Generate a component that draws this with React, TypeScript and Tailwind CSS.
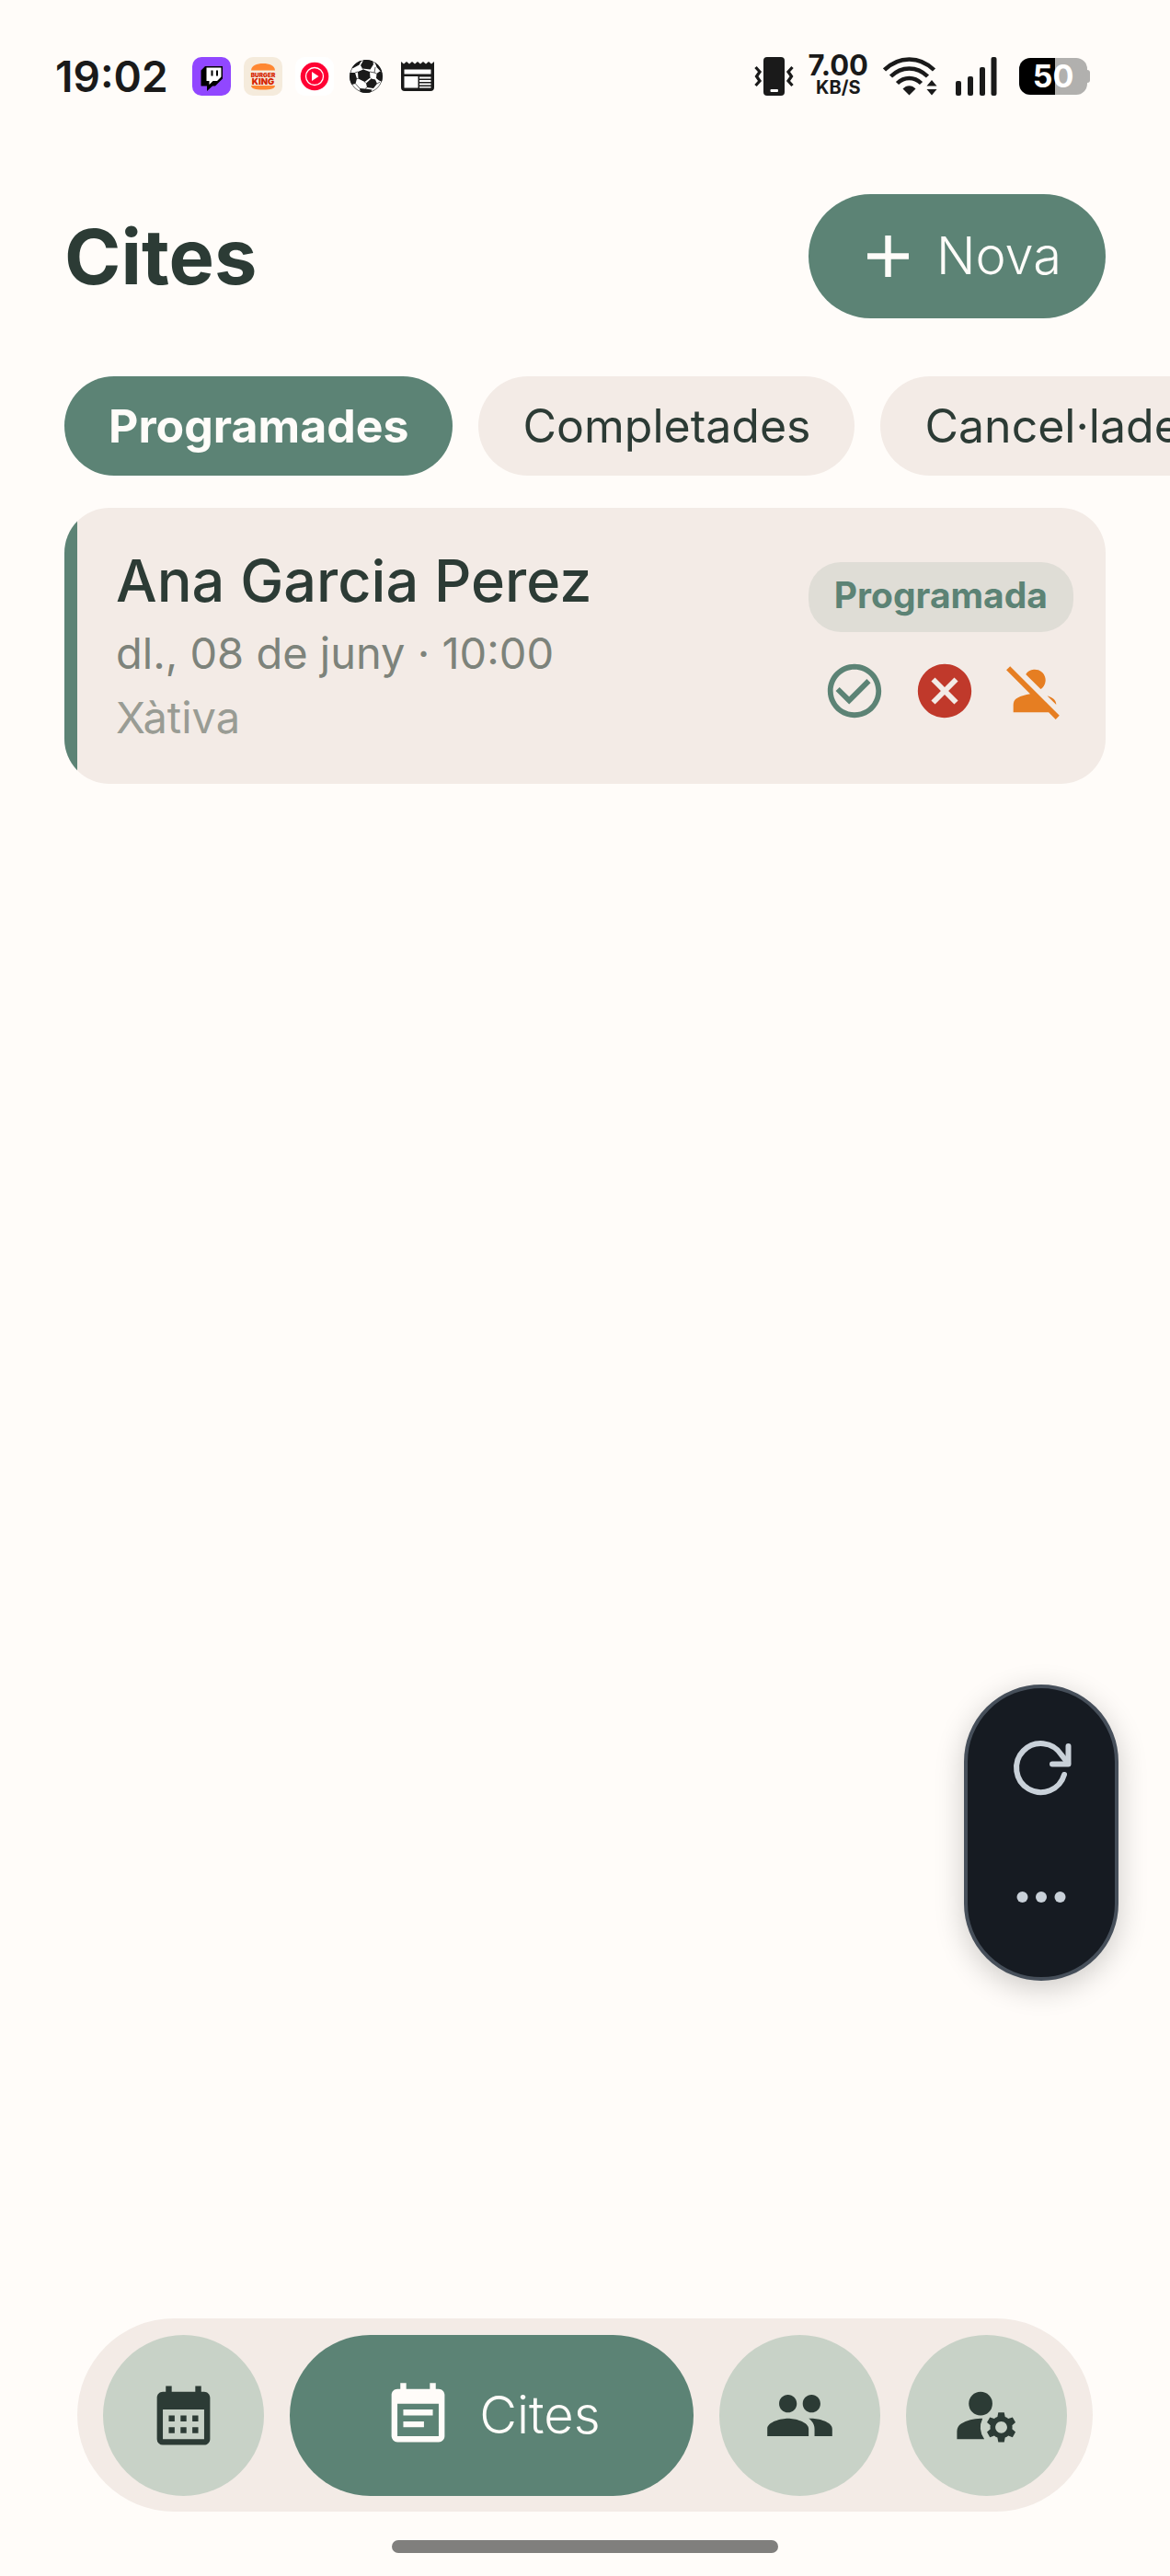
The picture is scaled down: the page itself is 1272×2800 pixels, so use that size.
import { useState } from "react";
import {
  MdAdd,
  MdCalendarMonth,
  MdCancel,
  MdCheckCircleOutline,
  MdEventNote,
  MdManageAccounts,
  MdPeople,
  MdPersonOff,
} from "react-icons/md";

const FILTERS = ["Programades", "Completades", "Cancel·lades"];

const NAV_ITEMS = [
  { label: "Calendari", Icon: MdCalendarMonth },
  { label: "Cites", Icon: MdEventNote },
  { label: "Pacients", Icon: MdPeople },
  { label: "Compte", Icon: MdManageAccounts },
];

const APPOINTMENTS = [
  {
    id: 1,
    name: "Ana Garcia Perez",
    date: "dl., 08 de juny · 10:00",
    place: "Xàtiva",
    status: "Programada",
  },
];

function TwitchIcon() {
  return (
    <svg viewBox="0 0 42 42" className="size-[42px]" aria-hidden="true">
      <rect width="42" height="42" rx="10" fill="#9147ff" />
      <path d="M14 10 9.500 14.500v17h6.500V37l6-5.500h3L33 23.500V10z" fill="#000" />
      <path
        d="M15.500 11.500H31.500V21.500l-4.500 4.500h-4.500l-4 4v-4h-3z"
        fill="#fff"
      />
      <path d="M20.500 14.500h2v6h-2zM26 14.500h2v6h-2z" fill="#000" />
    </svg>
  );
}

function BurgerIcon() {
  return (
    <svg viewBox="0 0 42 42" className="size-[42px]" aria-hidden="true">
      <rect width="42" height="42" rx="10" fill="#f5ebdc" />
      <path d="M8 14.500C8.500 9 14 7 21 7s12.500 2 13 7.500z" fill="#ff8732" />
      <path d="M8 31h26c-.5 3.500-4 4.500-13 4.500S8.500 34.500 8 31z" fill="#ff8732" />
      <g
        fill="#d62300"
        fontFamily="Inter, sans-serif"
        fontWeight="900"
        textAnchor="middle"
      >
        <text x="21" y="21.500" fontSize="6.500">
          BURGER
        </text>
        <text x="21" y="29.500" fontSize="9.500">
          KING
        </text>
      </g>
    </svg>
  );
}

function MusicIcon() {
  return (
    <svg viewBox="0 0 42 42" className="size-[42px]" aria-hidden="true">
      <rect width="42" height="42" rx="10" fill="#fff" />
      <circle cx="21" cy="21" r="15.300" fill="#ff0033" />
      <circle cx="21" cy="21" r="9.500" fill="none" stroke="#fff" strokeWidth="1.300" />
      <path d="M18 16v10l7.500-5z" fill="#fff" />
    </svg>
  );
}

function SoccerIcon() {
  return (
    <svg viewBox="0 0 36 36" className="size-[36px]" aria-hidden="true">
      <defs>
        <clipPath id="ball">
          <circle cx="18" cy="18" r="18" />
        </clipPath>
      </defs>
      <g clipPath="url(#ball)">
        <circle cx="18" cy="18" r="17.600" fill="#fff" stroke="#1a1a1a" strokeWidth=".8" />
        <path
          d="M9 13 15 10.500 22 13 22.500 19.500 16.500 24 9.500 20.500zM12 6 16-1 25 0 26 5 22.500 10.500 14 9.500zM2 9 9 0 13 1 10.500 5.500 4 9zM27 1 37 9 35 14 29.500 8zM29.500 15 33 12.500 37 14 36 24 32 22.500 29 20zM-1 14 6 14 8 20.500 6.500 26 2 27-1 22zM18 25.500 23.500 20.500 28 21.500 30 26 26 31 19 30zM11 31 17 31.500 24.500 32.500 22 37 12 37z"
          fill="#1a1a1a"
        />
        <path
          d="M9 13 6 14M15 10.500 14 9.500M22 13 27 14 29.500 15M27 14 28 8M22.500 19.500 23.500 20.500M16.500 24 18 25.500M9.500 20.500 8 20.500M6.500 26 11 31M30 26 33 24M19 30 17 31.500"
          stroke="#1a1a1a"
          strokeWidth=".7"
          fill="none"
        />
      </g>
    </svg>
  );
}

function NewsIcon() {
  return (
    <svg viewBox="0 0 36 32" className="w-[36px] h-[32px]" aria-hidden="true">
      <path
        d="M0 0 3 2.500 6 0 9 2.500 12 0 15 2.500 18 0 21 2.500 24 0 27 2.500 30 0 33 2.500 36 0V28a4 4 0 0 1-4 4H4a4 4 0 0 1-4-4z"
        fill="#1a1a1a"
      />
      <path d="M3.500 8.500h29v5h-29zM3.500 16h15v12.500h-15z" fill="#fff" />
      <path d="M20 16.500h12.500v2H20zM20 20h12.500v2H20zM20 23.500h12.500v2H20zM20 27h12.500v1.500H20z" fill="#fff" />
    </svg>
  );
}

function VibrateIcon() {
  return (
    <svg viewBox="0 0 43 42" className="w-[43px] h-[42px]" aria-hidden="true">
      <rect x="10" width="23" height="42" rx="4" fill="#1a1a1a" />
      <rect x="17.500" y="35" width="8.500" height="3" rx="1" fill="#fff" />
      <path
        d="M1.500 11 6 16 2.500 21 6 26 1.500 31M41.500 11 37 16 40.500 21 37 26 41.500 31"
        fill="none"
        stroke="#1a1a1a"
        strokeWidth="3.200"
      />
    </svg>
  );
}

function WifiIcon() {
  return (
    <svg viewBox="0 0 59 42" className="w-[59px] h-[42px]" aria-hidden="true">
      <g fill="none" stroke="#1a1a1a" strokeWidth="4.500">
        <path d="M1.500 14C17-1.500 40-1.500 55.500 14" />
        <path d="M8.500 21C20 9.500 37 9.500 48.500 21" />
        <path d="M15.500 28.500C23 21 34 21 41.500 28.500" />
      </g>
      <path d="M21.500 34.500c4-4.500 10-4.500 14 0L28.500 41.500z" fill="#1a1a1a" />
      <path d="M47.500 31.500 53 25l5.500 6.500zM47.500 35H58.500L53 41.500z" fill="#1a1a1a" />
    </svg>
  );
}

function SignalIcon() {
  return (
    <svg viewBox="0 0 45 42" className="w-[45px] h-[42px]" aria-hidden="true">
      <g fill="#1a1a1a">
        <rect y="26" width="6" height="16" rx="2" />
        <rect x="13" y="21" width="6" height="21" rx="2" />
        <rect x="26" y="11" width="6" height="31" rx="2" />
        <rect x="38.500" width="6" height="42" rx="2" />
      </g>
    </svg>
  );
}

function StatusBar() {
  return (
    <div className="flex items-center justify-between pl-[60px] pr-[87px] pt-[56px] text-[#1a1a1a]">
      <div className="flex items-center">
        <span className="text-[46px] leading-[54px] font-semibold">19:02</span>
        <div className="ml-[26px] flex items-center gap-[14px]">
          <TwitchIcon />
          <BurgerIcon />
          <MusicIcon />
        </div>
        <div className="ml-[17px] flex items-center gap-5">
          <SoccerIcon />
          <NewsIcon />
        </div>
      </div>
      <div className="flex items-center">
        <VibrateIcon />
        <div className="ml-4 flex flex-col items-center font-bold">
          <span className="text-[31px] leading-[24px]">7.00</span>
          <span className="text-[20px] leading-[24px]">KB/S</span>
        </div>
        <div className="ml-4">
          <WifiIcon />
        </div>
        <div className="ml-5">
          <SignalIcon />
        </div>
        <div className="ml-6 flex items-center">
          <div className="flex h-10 w-[74px] items-center justify-center rounded-xl bg-linear-to-r from-black from-53% to-[#b1b0ae] to-53%">
            <span className="text-[34px] leading-10 font-bold text-white">
              50
            </span>
          </div>
          <div className="h-[14px] w-[3px] rounded-r-full bg-[#b1b0ae]" />
        </div>
      </div>
    </div>
  );
}

function AppointmentCard({
  appointment,
}: {
  appointment: (typeof APPOINTMENTS)[number];
}) {
  return (
    <article className="flex overflow-hidden rounded-[49px] bg-[#f3ebe6]">
      <div className="w-[14px] shrink-0 bg-[#5c8375]" />
      <div className="flex flex-1 items-center justify-between py-11 pr-[35px] pl-[42px]">
        <div>
          <h2 className="text-[63px] leading-[70px] font-medium text-[#2c3b35]">
            {appointment.name}
          </h2>
          <p className="mt-4 text-[47px] leading-[56px] text-[#7d837b]">
            {appointment.date}
          </p>
          <p className="mt-[14px] text-[47px] leading-[56px] text-[#999c94]">
            {appointment.place}
          </p>
        </div>
        <div className="flex flex-col items-end gap-[22px]">
          <span className="rounded-[35px] bg-[#dfddd6] px-7 pt-3 pb-4 text-[39px] leading-[48px] font-bold text-[#5c8375]">
            {appointment.status}
          </span>
          <div className="flex gap-[14px]">
            <button type="button" aria-label="Completar" className="p-[7px]">
              <MdCheckCircleOutline className="size-[70px] text-[#5c8375]" />
            </button>
            <button type="button" aria-label="Cancel·lar" className="p-[7px]">
              <MdCancel className="size-[70px] text-[#c0392b]" />
            </button>
            <button type="button" aria-label="No presentat" className="p-[7px]">
              <MdPersonOff className="size-[70px] text-[#e67e22]" />
            </button>
          </div>
        </div>
      </div>
    </article>
  );
}

function FloatingTools() {
  return (
    <div className="absolute right-14 bottom-[647px] flex w-[168px] flex-col items-center rounded-full border-4 border-[#464f5a] bg-[#161b22] py-10 text-[#c9d1d9] shadow-[0_8px_32px_rgba(0,0,0,0.2)]">
      <button type="button" aria-label="Recarregar" className="p-3">
        <svg
          viewBox="0 0 70 70"
          className="size-[70px]"
          fill="none"
          stroke="currentColor"
          strokeWidth="6"
          strokeLinecap="round"
          strokeLinejoin="round"
        >
          <path d="M60 42A26.500 26.500 0 1 1 57 20.500L64 29.500" />
          <path d="M64.500 11V30.500H47" />
        </svg>
      </button>
      <button type="button" aria-label="Més opcions" className="mt-[46px] p-3">
        <svg viewBox="0 0 70 70" className="size-[70px]" fill="currentColor">
          <circle cx="14.500" cy="35" r="6" />
          <circle cx="35" cy="35" r="6" />
          <circle cx="55.500" cy="35" r="6" />
        </svg>
      </button>
    </div>
  );
}

export default function App() {
  const [filter, setFilter] = useState("Programades");
  const [section, setSection] = useState("Cites");

  return (
    <div className="relative flex min-h-screen flex-col overflow-hidden bg-[#fffcf9] font-[Inter,sans-serif]">
      <StatusBar />

      <header className="mt-[101px] flex items-center justify-between px-[70px]">
        <h1 className="text-[83px] leading-[100px] font-bold text-[#2c3b35]">
          Cites
        </h1>
        <button
          type="button"
          className="flex items-center gap-[14px] rounded-full bg-[#5c8375] px-12 py-[29px] text-[#fffcf9]"
        >
          <MdAdd className="size-[77px]" />
          <span className="text-[56px] leading-[77px] font-light">Nova</span>
        </button>
      </header>

      <div className="mt-[63px] flex gap-7 overflow-hidden px-[70px]">
        {FILTERS.map((name) => (
          <button
            key={name}
            type="button"
            onClick={() => setFilter(name)}
            className={
              name === filter
                ? "shrink-0 rounded-full bg-[#5c8375] px-12 py-6 text-[50px] leading-[60px] font-bold text-[#fffcf9]"
                : "shrink-0 rounded-full bg-[#f3ebe6] px-12 py-6 text-[50px] leading-[60px] text-[#2c3b35]"
            }
          >
            {name}
          </button>
        ))}
      </div>

      <main className="mt-[35px] flex flex-1 flex-col gap-7 px-[70px]">
        {APPOINTMENTS.map((appointment) => (
          <AppointmentCard key={appointment.id} appointment={appointment} />
        ))}
      </main>

      <nav className="mx-[84px] flex gap-7 rounded-full bg-[#f3ebe6] px-7 pt-[18px] pb-[17px]">
        {NAV_ITEMS.map(({ label, Icon }) =>
          label === section ? (
            <button
              key={label}
              type="button"
              className="flex h-[175px] flex-1 items-center justify-center gap-7 rounded-full bg-[#5c8375] text-[#fffcf9]"
            >
              <Icon className="size-[77px]" />
              <span className="text-[56px] leading-[77px] font-light">
                {label}
              </span>
            </button>
          ) : (
            <button
              key={label}
              type="button"
              aria-label={label}
              onClick={() => setSection(label)}
              className="flex size-[175px] items-center justify-center rounded-full bg-[#c8d2c7] text-[#2c3b35]"
            >
              <Icon className="size-[77px]" />
            </button>
          )
        )}
      </nav>
      <div className="mx-auto mt-[31px] mb-[25px] h-[14px] w-[33%] rounded-full bg-[#807f7d]" />

      <FloatingTools />
    </div>
  );
}
